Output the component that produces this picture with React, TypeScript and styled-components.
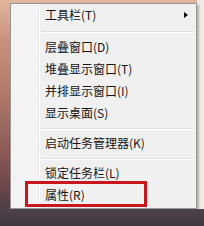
import React from "react";
import styled, { createGlobalStyle } from "styled-components";

const GlobalStyle = createGlobalStyle`
  html, body { margin: 0; padding: 0; overflow: hidden; }
  body { font-family: "Noto Sans CJK SC", "Noto Sans", sans-serif; }
`;

const Scene = styled.div`
  width: 204px;
  height: 226px;
  display: flex;
  flex-direction: column;
  background:
    linear-gradient(to right, transparent 197px, #f1e9e6 197px),
    linear-gradient(to bottom, #e3b59c 0px, #c9917c 40px, #b27a6b 90px, #8c5a57 150px, #6a4549 190px, #4e4046 206px);
`;

const Desktop = styled.div`
  display: flex;
  padding: 3px 0 0 10px;
`;

const Menu = styled.div`
  width: 187px;
  box-sizing: border-box;
  border: 1px solid #979797;
  padding: 0 2px 2px 0;
  display: flex;
  flex-direction: column;
  background: linear-gradient(
    to right,
    #f3f3f3 0px,
    #f3f3f3 27px,
    #e2e3e3 27px,
    #e2e3e3 28px,
    #ffffff 28px,
    #ffffff 29px,
    #f0f0f0 29px
  );
  box-shadow: 2px 2px 2px rgba(0, 0, 0, 0.25);
`;

const Item = styled.div`
  position: relative;
  height: 22px;
  display: flex;
  align-items: center;
  padding-left: 34px;
  font-size: 12px;
  line-height: 22px;
  color: #151515;
  white-space: nowrap;
`;

const Arrow = styled.span`
  margin-left: auto;
  margin-right: 6px;
  width: 0;
  height: 0;
  border-top: 3.5px solid transparent;
  border-bottom: 3.5px solid transparent;
  border-left: 4px solid #000;
`;

const Separator = styled.div<{ $top: number; $h: number }>`
  height: ${(p) => p.$h}px;
  box-sizing: border-box;
  padding: ${(p) => p.$top}px 0 0 30px;
  &::after {
    content: "";
    display: block;
    height: 1px;
    border-top: 1px solid #e0e0e0;
    border-bottom: 1px solid #ffffff;
    height: 0;
  }
`;

const Highlight = styled.div`
  position: absolute;
  left: 14px;
  top: -3px;
  width: 122px;
  height: 26px;
  box-sizing: border-box;
  border: 3px solid #c8161e;
  pointer-events: none;
`;

const Taskbar = styled.div`
  flex: 1;
  background: linear-gradient(to bottom, #4d4449, #3f383d);
`;

export default function App() {
  return (
    <>
      <GlobalStyle />
      <Scene>
        <Desktop>
          <Menu>
            <Item>
              工具栏(T)
              <Arrow />
            </Item>
            <Separator $top={5} $h={10} />
            <Item>层叠窗口(D)</Item>
            <Item>堆叠显示窗口(T)</Item>
            <Item>并排显示窗口(I)</Item>
            <Item>显示桌面(S)</Item>
            <Separator $top={4} $h={8} />
            <Item>启动任务管理器(K)</Item>
            <Separator $top={4} $h={8} />
            <Item>锁定任务栏(L)</Item>
            <Item>
              属性(R)
              <Highlight />
            </Item>
          </Menu>
        </Desktop>
        <Taskbar />
      </Scene>
    </>
  );
}
